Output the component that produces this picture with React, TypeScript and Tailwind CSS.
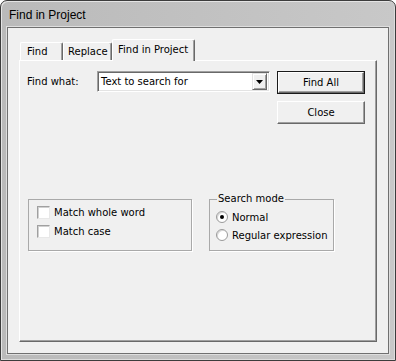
import React from 'react';

const ui = { fontFamily: '"DejaVu Sans", "Liberation Sans", sans-serif' };

const RaisedButton: React.FC<{ label: string; isDefault?: boolean }> = ({ label, isDefault }) => (
    <div className={`w-[88px] h-[23px] ${isDefault ? 'border border-[#1a1a1a]' : ''}`}>
        <div className="w-full h-full bg-[#f0f0f0] border border-t-white border-l-white border-r-[#696969] border-b-[#696969] shadow-[inset_-1px_-1px_0_#a0a0a0] flex items-center justify-center text-[10px] text-black">
            {label}
        </div>
    </div>
);

const CheckBox: React.FC<{ label: string }> = ({ label }) => (
    <div className="flex items-center h-[19px] whitespace-nowrap">
        <div className="w-[13px] h-[13px] shrink-0 bg-white border border-t-[#a0a0a0] border-l-[#a0a0a0] border-r-[#e8e8e8] border-b-[#e8e8e8] shadow-[inset_1px_1px_0_#d0d0d0]" />
        <span className="ml-[4px] text-[10px] text-black">{label}</span>
    </div>
);

const Radio: React.FC<{ label: string; checked?: boolean }> = ({ label, checked }) => (
    <div className="flex items-center h-[18px] whitespace-nowrap">
        <div className="w-[12px] h-[12px] shrink-0 rounded-full bg-white border border-[#9a9a9a] flex items-center justify-center shadow-[inset_1px_1px_0_#d8d8d8]">
            {checked && <div className="w-[4px] h-[4px] rounded-full bg-black" />}
        </div>
        <span className="ml-[4px] text-[10px] text-black">{label}</span>
    </div>
);

export default function App() {
    return (
        <div className="w-[396px] h-[361px] bg-white" style={ui}>
            <div className="w-full h-full flex flex-col rounded-t-[7px] border border-[#3c3c3c] bg-gradient-to-r from-[#bababa] to-[#c8c8c8] shadow-[inset_1px_1px_0_#e4e4e4,inset_-1px_-1px_0_#dcdcdc]">
                {/* Title bar */}
                <div className="h-[26px] flex items-center pl-[8px] pt-[2px] text-[12px] text-black" style={{ fontFamily: '"Liberation Sans", sans-serif' }}>
                    Find in Project
                </div>

                {/* Client area */}
                <div className="flex-1 mx-[6px] mb-[6px] border border-[#707070] shadow-[0_0_0_1px_#dedede] bg-[#f0f0f0] flex flex-col px-[11px] pt-[12px] pb-[11px]">
                    {/* Tabs */}
                    <div className="flex items-end h-[20px] relative z-10">
                        <div className="ml-[1px] w-[43px] h-[18px] bg-[#f0f0f0] border border-b-0 border-t-white border-l-white border-r-[#696969] rounded-t-[2px] shadow-[inset_-1px_0_0_#a0a0a0] flex items-center pl-[6px] text-[10px] text-black">
                            Find
                        </div>
                        <div className="w-[49px] h-[18px] bg-[#f0f0f0] border border-b-0 border-t-white border-l-white border-r-[#696969] rounded-t-[2px] shadow-[inset_-1px_0_0_#a0a0a0] flex items-center pl-[4px] text-[10px] text-black">
                            Replace
                        </div>
                        <div className="-mb-[1px] w-[83px] h-[22px] bg-[#f0f0f0] border border-b-0 border-t-white border-l-white border-r-[#696969] rounded-t-[2px] shadow-[inset_-1px_0_0_#a0a0a0] flex items-center pl-[5px] pb-[2px] text-[10px] text-black">
                            Find in Project
                        </div>
                    </div>

                    {/* Tab panel */}
                    <div className="flex-1 border border-t-white border-l-white border-r-[#696969] border-b-[#696969] shadow-[inset_-1px_-1px_0_#a0a0a0] flex flex-col pt-[10px] pl-[7px]">
                        <div className="flex items-start">
                            <div className="w-[70px] h-[21px] flex items-center text-[10px] text-black">Find what:</div>
                            <div className="w-[173px] h-[21px] bg-white border border-t-[#a0a0a0] border-l-[#a0a0a0] border-r-white border-b-white shadow-[inset_1px_1px_0_#696969,inset_-1px_-1px_0_#e3e3e3] flex items-center pl-[3px] pr-[2px]">
                                <span className="flex-1 text-[10px] text-black">Text to search for</span>
                                <div className="w-[15px] h-[17px] bg-[#f0f0f0] border border-t-[#e3e3e3] border-l-[#e3e3e3] border-r-[#696969] border-b-[#696969] shadow-[inset_1px_1px_0_#fff,inset_-1px_-1px_0_#a0a0a0] flex items-center justify-center">
                                    <svg width="7" height="4" viewBox="0 0 7 4">
                                        <path d="M0 0h7L3.5 4z" fill="#000" />
                                    </svg>
                                </div>
                            </div>
                            <div className="ml-[7px] flex flex-col gap-[7px]">
                                <RaisedButton label="Find All" isDefault />
                                <RaisedButton label="Close" />
                            </div>
                        </div>

                        {/* Option groups */}
                        <div className="flex items-start mt-[69px] ml-[1px]">
                            <fieldset className="mt-[6px] w-[164px] h-[52px] border border-[#a9a9a9] shadow-[1px_1px_0_#fff] pl-[8px] pt-[3px]">
                                <CheckBox label="Match whole word" />
                                <CheckBox label="Match case" />
                            </fieldset>
                            <fieldset className="ml-[17px] w-[125px] h-[58px] border border-[#a9a9a9] shadow-[1px_1px_0_#fff] pl-[6px] pr-0">
                                <legend className="ml-[1px] px-[1px] text-[10px] leading-[12px] text-black">Search mode</legend>
                                <div className="mt-[3px]">
                                    <Radio label="Normal" checked />
                                    <Radio label="Regular expression" />
                                </div>
                            </fieldset>
                        </div>
                    </div>
                </div>
            </div>
        </div>
    );
}
